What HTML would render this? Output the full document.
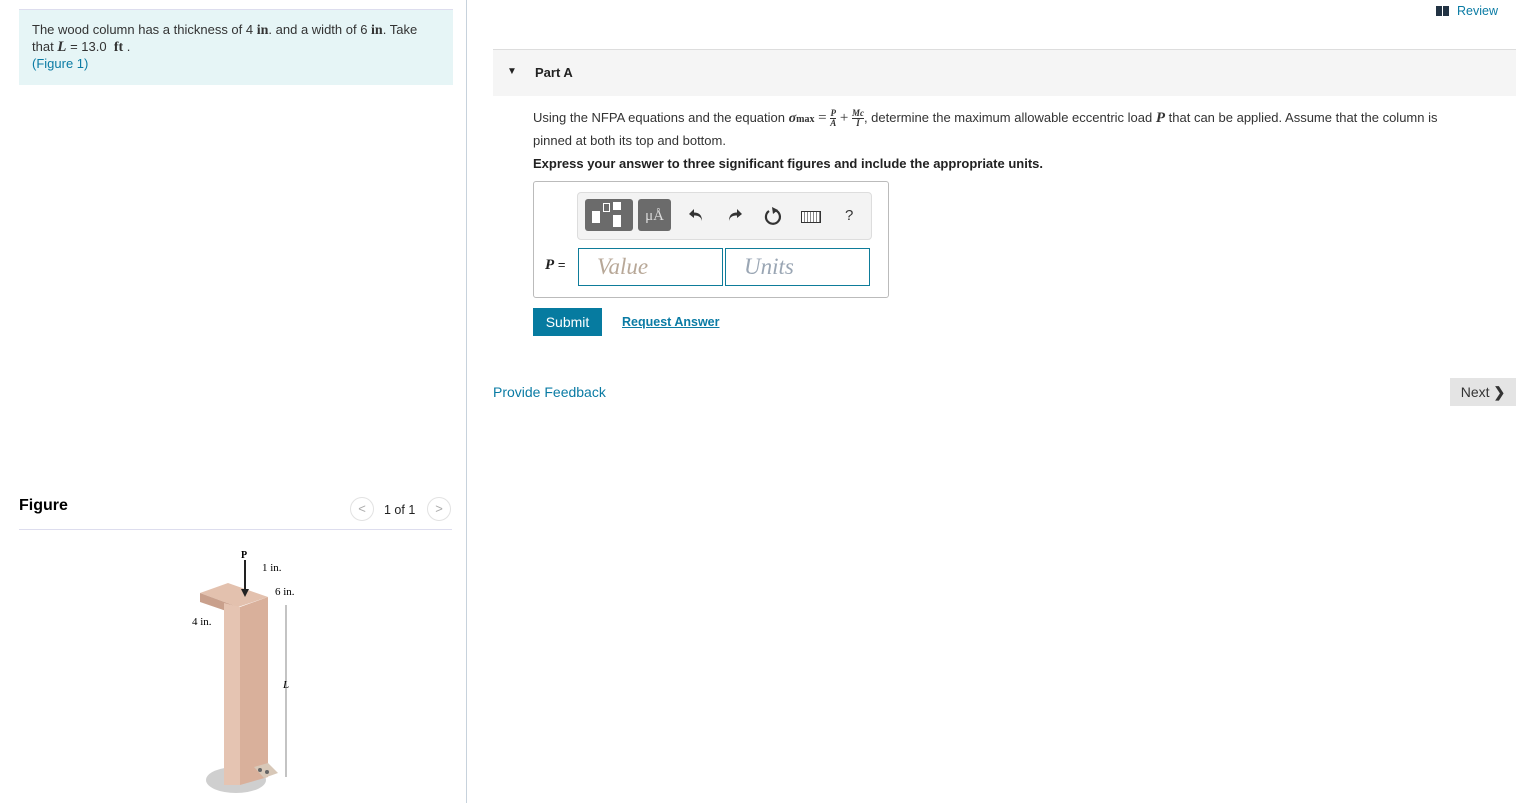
<!DOCTYPE html>
<html><head><meta charset="utf-8"><style>
body{margin:0;width:1519px;height:803px;position:relative;background:#fff;font-family:"Liberation Sans",sans-serif;color:#333;overflow:hidden}
.a{position:absolute}
.s{font-family:"Liberation Serif",serif}
.fr{display:inline-block;vertical-align:middle;text-align:center;font-family:"Liberation Serif",serif;font-style:italic;font-weight:bold;font-size:9px;line-height:9px}
.fr span{display:block}
.fr span+span{border-top:1px solid #333}
</style></head><body>
<div class="a" style="left:466px;top:0;width:1px;height:803px;background:#c7d2dc"></div>
<div class="a" style="left:19px;top:9px;width:434px;height:75px;background:#e6f5f6;border-top:1px solid #dde"></div>
<div class="a" style="left:32px;top:22px;font-size:13px;line-height:16px;color:#333;width:415px">The wood column has a thickness of 4 <b class="s" style="font-size:14px">in</b>. and a width of 6 <b class="s" style="font-size:14px">in</b>. Take<br>that <i class="s" style="font-size:15px;font-weight:bold">L</i> = 13.0 &nbsp;<b class="s" style="font-size:14px">ft</b> .<br><span style="color:#0a7ba4">(Figure 1)</span></div>

<div class="a" style="left:19px;top:497px;font-size:16px;font-weight:bold;color:#000">Figure</div>
<div class="a" style="left:350px;top:497px;width:22px;height:22px;border:1px solid #e2e2e2;border-radius:50%;text-align:center;line-height:22px;color:#aaa;font-size:13px">&lt;</div>
<div class="a" style="left:384px;top:503px;font-size:12.5px;color:#222">1 of 1</div>
<div class="a" style="left:427px;top:497px;width:22px;height:22px;border:1px solid #e2e2e2;border-radius:50%;text-align:center;line-height:22px;color:#aaa;font-size:13px">&gt;</div>
<div class="a" style="left:19px;top:529px;width:433px;height:1px;background:#dde"></div>

<svg class="a" style="left:188px;top:545px" width="120" height="255" viewBox="0 0 120 255">
<ellipse cx="48" cy="235" rx="30" ry="13" fill="#cfcfcf"/>
<polygon points="12,48 40,38 80,52 50,62" fill="#e3c1ae"/>
<polygon points="12,48 12,57 50,70 50,62" fill="#c9a08c"/>
<polygon points="36,58 36,240 52,240 52,62" fill="#e5c4b2"/>
<polygon points="52,62 52,240 80,232 80,52" fill="#d9b09b"/>
<polygon points="66,222 80,218 90,228 76,233" fill="#d8c8b8"/>
<circle cx="72" cy="225" r="2" fill="#666"/><circle cx="79" cy="227" r="2" fill="#666"/>
<line x1="57" y1="15" x2="57" y2="48" stroke="#222" stroke-width="2"/>
<polygon points="53,44 61,44 57,52" fill="#222"/>
<text x="53" y="13" font-family="Liberation Serif" font-weight="bold" font-size="10">P</text>
<text x="74" y="26" font-family="Liberation Serif" font-size="11">1 in.</text>
<text x="87" y="50" font-family="Liberation Serif" font-size="11">6 in.</text>
<text x="4" y="80" font-family="Liberation Serif" font-size="11">4 in.</text>
<line x1="98" y1="60" x2="98" y2="232" stroke="#555" stroke-width="0.7"/>
<text x="95" y="143" font-family="Liberation Serif" font-style="italic" font-size="11">L</text>
</svg>

<div class="a" style="left:1436px;top:6px;width:6px;height:10px;background:#234"></div>
<div class="a" style="left:1443px;top:6px;width:6px;height:10px;background:#234"></div>
<div class="a" style="left:1457px;top:4px;font-size:12.5px;color:#0a7ba4">Review</div>

<div class="a" style="left:493px;top:49px;width:1023px;height:1px;background:#ddd"></div>
<div class="a" style="left:493px;top:50px;width:1023px;height:46px;background:#f5f5f5"></div>
<div class="a" style="left:507px;top:66px;font-size:10px;color:#222">▼</div>
<div class="a" style="left:535px;top:65px;font-size:13px;font-weight:bold;color:#222">Part A</div>

<div class="a" style="left:533px;top:107px;font-size:13px;line-height:21px;color:#333;width:975px;white-space:nowrap">Using the NFPA equations and the equation <i class="s" style="font-size:14px;font-weight:bold">σ</i><b class="s" style="font-size:10px">max</b> <span class="s" style="font-size:15px">=</span> <span class="fr"><span>P</span><span>A</span></span> <span class="s" style="font-size:15px">+</span> <span class="fr"><span>Mc</span><span>I</span></span>, determine the maximum allowable eccentric load <i class="s" style="font-size:15px;font-weight:bold">P</i> that can be applied. Assume that the column is<br>pinned at both its top and bottom.</div>
<div class="a" style="left:533px;top:156px;font-size:13px;font-weight:bold;color:#222">Express your answer to three significant figures and include the appropriate units.</div>

<div class="a" style="left:533px;top:181px;width:354px;height:115px;border:1px solid #bbb;border-radius:3px"></div>
<div class="a" style="left:577px;top:192px;width:293px;height:46px;border:1px solid #ddd;border-radius:4px;background:#f3f3f3"></div>
<div class="a" style="left:585px;top:199px;width:48px;height:32px;border-radius:3px;background:#6b6b6b"></div>
<div class="a" style="left:592px;top:211px;width:8px;height:12px;background:#fff"></div>
<div class="a" style="left:603px;top:203px;width:5px;height:7px;border:1px solid #fff"></div>
<div class="a" style="left:613px;top:202px;width:8px;height:8px;background:#fff"></div>
<div class="a" style="left:613px;top:215px;width:8px;height:12px;background:#fff"></div>
<div class="a" style="left:638px;top:199px;width:33px;height:32px;border-radius:3px;background:#6b6b6b;color:#ddd;font-family:'Liberation Serif',serif;font-size:15px;text-align:center;line-height:34px">μÅ</div>
<svg class="a" style="left:688px;top:206px" width="18" height="18" viewBox="0 0 18 18"><path d="M6 3 L1 8 L6 12 L6 9.5 C10 9.5 13 10.5 14 15 C14 9 11 6.5 6 6.5Z" fill="#333"/></svg>
<svg class="a" style="left:725px;top:206px" width="18" height="18" viewBox="0 0 18 18"><path d="M12 3 L17 8 L12 12 L12 9.5 C8 9.5 5 10.5 4 15 C4 9 7 6.5 12 6.5Z" fill="#333"/></svg>
<svg class="a" style="left:763px;top:206px" width="20" height="20" viewBox="0 0 20 20"><path d="M13 4.5 A7 7 0 1 1 6 5" fill="none" stroke="#333" stroke-width="2.2"/><path d="M9 1 L15 4 L10 8Z" fill="#333"/></svg>
<div class="a" style="left:801px;top:211px;width:18px;height:10px;border:1px solid #333;background:repeating-linear-gradient(90deg,#fff 0 2px,#888 2px 3px)"></div>
<div class="a" style="left:845px;top:207px;font-size:15px;color:#333">?</div>

<div class="a s" style="left:545px;top:257px;font-size:15px;color:#222"><i><b>P</b></i> <span style="font-family:'Liberation Sans';font-size:13px">=</span></div>
<div class="a s" style="left:578px;top:248px;border:1px solid #0e7c9a;font-size:23px;font-style:italic;color:#b8a898;line-height:36px;padding-left:18px;box-sizing:border-box;width:145px;height:38px">Value</div>
<div class="a s" style="left:725px;top:248px;width:145px;height:38px;border:1px solid #0e7c9a;box-sizing:border-box;font-size:23px;font-style:italic;color:#9aa6b4;line-height:36px;padding-left:18px">Units</div>

<div class="a" style="left:533px;top:308px;width:69px;height:28px;background:#067ba0;color:#fff;font-size:14px;text-align:center;line-height:28px">Submit</div>
<div class="a" style="left:622px;top:315px;font-size:12.5px;font-weight:bold;color:#0a7ba4;text-decoration:underline">Request Answer</div>

<div class="a" style="left:493px;top:384px;font-size:14px;color:#0a7ba4">Provide Feedback</div>
<div class="a" style="left:1450px;top:378px;width:66px;height:28px;background:#e4e4e4;font-size:14px;color:#333;line-height:28px;text-align:center">Next <b>❯</b></div>
</body></html>
